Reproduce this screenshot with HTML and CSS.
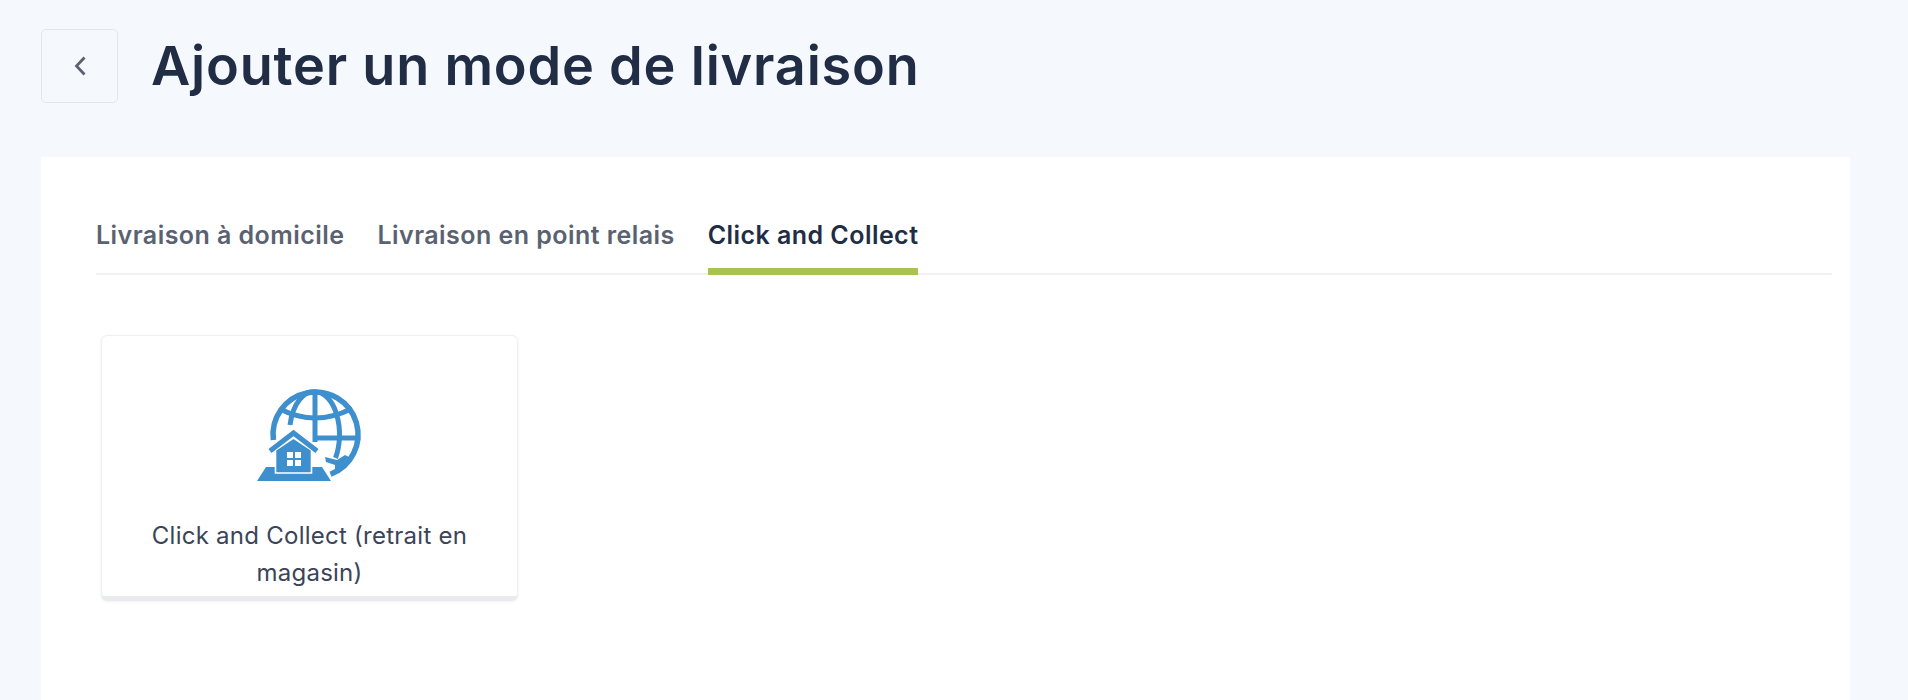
FILE: index.html
```html
<!DOCTYPE html>
<html lang="fr">

<head>
    <meta charset="UTF-8">
    <title>Ajouter un mode de livraison</title>
    <link rel="stylesheet" href="styles.css">
</head>

<body>
    <header class="page-header">
        <a class="back-btn" href="#">
            <svg width="14" height="24" viewBox="0 0 14 24">
                <path d="M11.5 3.5 L3.5 12 L11.5 20.5" fill="none" stroke="#5a6270" stroke-width="2.8" />
            </svg>
        </a>
        <h1>Ajouter un mode de livraison</h1>
    </header>

    <main class="panel">
        <nav class="tabs">
            <a class="tab" href="#">Livraison à domicile</a>
            <a class="tab" href="#">Livraison en point relais</a>
            <a class="tab active" href="#">Click and Collect</a>
        </nav>

        <div class="cards">
            <div class="card">
                <svg class="card-icon" width="160" height="130" viewBox="0 0 160 130">
                    <!-- globe -->
                    <g fill="none" stroke="#3d8fce" stroke-width="5">
                        <path d="M43.4 70 A42.5 42.5 0 1 1 100.5 104.3" stroke-width="5.5" />
                        <path d="M85.5 22 A24 42.5 0 0 1 105.5 88" />
                        <path d="M85.5 22 A24 42.5 0 0 0 60 55" />
                        <path d="M85 22 V72" />
                        <path d="M50 39 Q85 57 121 39" />
                        <path d="M85 68 H127" />
                    </g>
                    <!-- plane -->
                    <path d="M95 87 L107 90 L115 85 L119 87 L113 94 L110 102 L105 100 L105 95 L96 92 Z" fill="#3d8fce" />
                    <!-- house -->
                    <path d="M27 111 L36 97 H92 L101 111 Z" fill="#3d8fce" />
                    <path d="M45.5 80 L63.5 68 L81.5 80 V103 H45.5 Z" fill="#3d8fce" stroke="#fff" stroke-width="1.6" />
                    <path d="M40 81 L63.5 63 L87 81" fill="none" stroke="#3d8fce" stroke-width="5" />
                    <path d="M57 82 H63 V88 H57 Z M65 82 H71 V88 H65 Z M57 90 H63 V96 H57 Z M65 90 H71 V96 H65 Z" fill="#fff" />
                </svg>
                <p class="card-label">Click and Collect (retrait en magasin)</p>
            </div>
        </div>
    </main>
</body>

</html>
```

FILE: styles.css
```css
body {
    font-family: Inter, "Open Sans", sans-serif;
    margin: 0;
    background-color: #f5f8fd;
    color: #212d45;
}

a {
    text-decoration: none;
    color: inherit;
}

.page-header {
    display: flex;
    align-items: flex-start;
    gap: 33px;
    padding: 29px 0 0 41px;
    height: 157px;
    box-sizing: border-box;
}

.back-btn {
    width: 77px;
    height: 74px;
    box-sizing: border-box;
    display: flex;
    align-items: center;
    justify-content: center;
    border: 1px solid #e3e6eb;
    border-radius: 5px;
}

h1 {
    margin: 0;
    font-size: 54px;
    line-height: 74px;
    font-weight: 600;
    letter-spacing: 0.8px;
}

.panel {
    margin: 0 58px 0 41px;
    background: white;
    padding: 40px 18px 0 55px;
    height: 543px;
    box-sizing: border-box;
}

.tabs {
    display: flex;
    gap: 33px;
    border-bottom: 2px solid #f0f1f4;
    height: 78px;
    box-sizing: border-box;
}

.tab {
    font-size: 25px;
    letter-spacing: 0.45px;
    font-weight: 600;
    color: #5a6272;
    line-height: 36px;
    padding-top: 20px;
    height: 78px;
    box-sizing: border-box;
}

.tab.active {
    color: #212d45;
    border-bottom: 7px solid #a8c34f;
}

.cards {
    display: flex;
    padding: 60px 0 0 5px;
}

.card {
    width: 417px;
    height: 266px;
    box-sizing: border-box;
    border: 1px solid #eff0f3;
    border-bottom: 5px solid #e9ebee;
    border-radius: 6px;
    box-shadow: 0 1px 3px rgba(0, 0, 0, 0.06);
    display: flex;
    flex-direction: column;
    align-items: center;
    padding-top: 34px;
}

.card-icon {
    display: block;
}

.card-label {
    margin: 17px 0 0;
    padding: 0 40px;
    text-align: center;
    font-size: 24px;
    letter-spacing: 0.25px;
    line-height: 37px;
    color: #3b4458;
}
```
